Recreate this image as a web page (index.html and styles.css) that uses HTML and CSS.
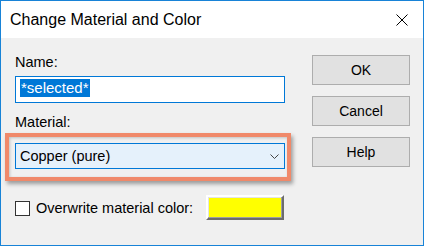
FILE: index.html
```html
<!DOCTYPE html>
<html lang="en">
  <head>
    <meta charset="UTF-8" />
    <title>Change Material and Color</title>
    <link rel="stylesheet" href="styles.css">
  </head>
  <body>
    <div class="window">
      <div class="titlebar">
        <span class="title">Change Material and Color</span>
        <svg class="close" width="12" height="12" viewBox="0 0 12 12">
          <path d="M0.5 0.5 L11.5 11.5 M11.5 0.5 L0.5 11.5" stroke="#000" stroke-width="1" fill="none" />
        </svg>
      </div>

      <div class="client">
        <div class="fields">
          <label class="label">Name:</label>
          <div class="textbox"><span class="selected">*selected*</span></div>

          <label class="label material">Material:</label>
          <div class="combo">
            <span>Copper (pure)</span>
            <svg class="chevron" width="9" height="5" viewBox="0 0 9 5">
              <path d="M0.5 0.5 L4.5 4.5 L8.5 0.5" stroke="#444" stroke-width="1" fill="none" />
            </svg>
            <div class="callout"></div>
          </div>

          <div class="check-row">
            <span class="checkbox"></span>
            <span class="check-text">Overwrite material color:</span>
            <span class="swatch"></span>
          </div>
        </div>

        <div class="buttons">
          <button>OK</button>
          <button>Cancel</button>
          <button>Help</button>
        </div>
      </div>
    </div>
  </body>
</html>
```

FILE: styles.css
```css
* {
  margin: 0;
  padding: 0;
  box-sizing: border-box;
}

body {
  font-family: "Liberation Sans", Arial, sans-serif;
  background: #f0f0f0;
}

.window {
  width: 424px;
  height: 246px;
  border: 1px solid #1883d7;
  background: #f0f0f0;
  display: flex;
  flex-direction: column;
}

.titlebar {
  height: 37px;
  background: #ffffff;
  display: flex;
  align-items: center;
  justify-content: space-between;
  padding: 1px 15px 0 9px;
}

.title {
  font-size: 16px;
  color: #000000;
}

.close {
  display: block;
}

.client {
  flex: 1;
  display: flex;
  padding-left: 14px;
}

.fields {
  width: 270px;
  padding-top: 16px;
  display: flex;
  flex-direction: column;
}

.label {
  display: block;
  font-size: 14.5px;
  line-height: 16px;
  color: #000000;
}

.textbox {
  margin-top: 6px;
  height: 27px;
  background: #ffffff;
  border: 1px solid #0078d7;
  padding: 2px 0 0 4px;
}

.selected {
  display: inline-block;
  background: #0078d7;
  color: #ffffff;
  font-size: 15px;
  line-height: 18px;
  padding: 0 1px;
}

.material {
  margin-top: 11px;
}

.combo {
  position: relative;
  margin-top: 13px;
  height: 26px;
  background: #e5f1fb;
  border: 1px solid #0078d7;
  display: flex;
  align-items: center;
  justify-content: space-between;
  padding: 0 5px 0 4px;
  font-size: 14.5px;
}

.chevron {
  display: block;
  margin-top: 1px;
}

/* orange callout drawn over the combo */
.callout {
  position: absolute;
  left: -11px;
  top: -11px;
  right: -7px;
  bottom: -13px;
  border: 4px solid #f0896a;
  box-shadow: 2px 3px 4px rgba(0, 0, 0, 0.35), inset 1px 1px 3px rgba(0, 0, 0, 0.2);
}

.check-row {
  margin-top: 26px;
  display: flex;
  align-items: center;
  height: 25px;
  font-size: 14.5px;
}

.checkbox {
  width: 15px;
  height: 15px;
  border: 1px solid #333333;
  background: #ffffff;
  margin: 2px 6px 0 0;
}

.swatch {
  margin-left: auto;
  margin-right: 1px;
  width: 78px;
  height: 25px;
  background: #ffff00;
  border: 2px solid;
  border-color: #ffffff #6d6d6d #6d6d6d #ffffff;
  box-shadow: inset -1px -1px 0 #a0a0a0, inset 1px 1px 0 #e3e3e3;
}

.buttons {
  margin-left: 27px;
  padding-top: 17px;
  width: 98px;
  display: flex;
  flex-direction: column;
  gap: 11px;
}

.buttons button {
  height: 30px;
  background: #e1e1e1;
  border: 1px solid #adadad;
  font-family: "Liberation Sans", Arial, sans-serif;
  font-size: 14px;
  color: #000000;
}
```
